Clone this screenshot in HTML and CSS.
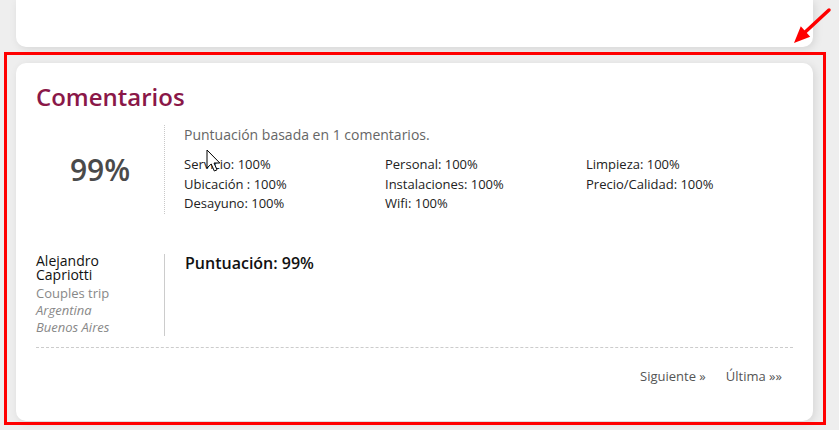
FILE: index.html
```html
<!DOCTYPE html>
<html lang="es">
<head>
<meta charset="utf-8">
<title>Comentarios</title>
<link rel="stylesheet" href="styles.css">
</head>
<body>
<div class="page">
  <div class="card card-top"></div>
  <section class="card comments">
    <h2 class="title">Comentarios</h2>
    <div class="summary">
      <div class="score">99%</div>
      <div class="details">
        <p class="based">Puntuación basada en 1 comentarios.</p>
        <div class="grid">
          <span>Servicio: 100%</span>
          <span>Personal: 100%</span>
          <span>Limpieza: 100%</span>
          <span>Ubicación : 100%</span>
          <span>Instalaciones: 100%</span>
          <span>Precio/Calidad: 100%</span>
          <span>Desayuno: 100%</span>
          <span>Wifi: 100%</span>
        </div>
      </div>
    </div>
    <div class="review">
      <div class="author">
        <div class="name">Alejandro Capriotti</div>
        <div class="trip">Couples trip</div>
        <div class="place">Argentina</div>
        <div class="place">Buenos Aires</div>
      </div>
      <div class="body">
        <div class="rating">Puntuación: 99%</div>
      </div>
    </div>
    <div class="pager">
      <a href="#">Siguiente »</a>
      <a href="#">Última »»</a>
    </div>
  </section>
</div>
<div class="highlight"></div>
<svg class="arrow" width="60" height="60" viewBox="0 0 60 60">
  <line x1="49" y1="10" x2="22" y2="35" stroke="#ff0000" stroke-width="3.5" stroke-linecap="round"/>
  <polygon points="14,43 20.8,26.3 30.2,36.7" fill="#ff0000"/>
</svg>
<svg class="cursor" width="16" height="24" viewBox="0 0 16 24">
  <path d="M1 1 L1 19 L5.2 15 L8.3 22 L11 20.8 L8 14 L13.8 14 Z" fill="#ffffff" stroke="#000000" stroke-width="1" stroke-linejoin="round"/>
</svg>
</body>
</html>
```
FILE: styles.css
```css
html, body {
  margin: 0;
  padding: 0;
}
body {
  background: #eeeeee;
  font-family: "Open Sans", "Liberation Sans", sans-serif;
  color: #222;
  width: 839px;
  height: 430px;
  overflow: hidden;
  position: relative;
}
.page {
  padding: 0 26px 0 16px;
  display: flex;
  flex-direction: column;
  gap: 16px;
}
.card {
  background: #ffffff;
  border-radius: 10px;
  box-shadow: 2px 2px 8px rgba(0, 0, 0, 0.10);
}
.card-top {
  height: 47px;
  border-radius: 0 0 10px 10px;
}
.comments {
  height: 358px;
  box-sizing: border-box;
  padding: 18px 20px 0 20px;
}
.title {
  margin: 0;
  font-size: 24px;
  line-height: 32px;
  font-weight: 600;
  color: #8a1748;
}
.summary {
  display: flex;
  margin-top: 12px;
}
.score {
  width: 128px;
  display: flex;
  align-items: center;
  justify-content: center;
  font-size: 30px;
  font-weight: 600;
  color: #4a4a4a;
  border-right: 1px dotted #c8c8c8;
}
.details {
  padding-left: 19px;
  flex: 1;
}
.based {
  margin: 0;
  font-size: 14px;
  line-height: 20px;
  color: #666;
}
.grid {
  margin-top: 10px;
  display: grid;
  grid-template-columns: 201px 201px 1fr;
  font-size: 13px;
  line-height: 19.5px;
  color: #222;
}
.review {
  display: flex;
  margin-top: 40px;
  padding-bottom: 11px;
  border-bottom: 1px dashed #cccccc;
}
.author {
  width: 118px;
  padding-right: 10px;
  border-right: 1px solid #cccccc;
  font-size: 13px;
  line-height: 17px;
}
.name {
  font-size: 14px;
  line-height: 14.5px;
  color: #111;
  margin-bottom: 2px;
}
.trip {
  color: #888;
}
.place {
  color: #888;
  font-style: italic;
}
.body {
  padding-left: 20px;
}
.rating {
  font-size: 16px;
  line-height: 19px;
  font-weight: 600;
  color: #111;
}
.pager {
  display: flex;
  justify-content: flex-end;
  gap: 20px;
  padding: 18px 11px 0 0;
  font-size: 13px;
  line-height: 20px;
}
.pager a {
  color: #555;
  text-decoration: none;
}
.highlight {
  position: absolute;
  left: 4px;
  top: 52px;
  width: 816px;
  height: 367px;
  border: 3.5px solid #ff0000;
  pointer-events: none;
}
.arrow {
  position: absolute;
  left: 780px;
  top: 0;
}
.cursor {
  position: absolute;
  left: 206px;
  top: 149px;
}
```
